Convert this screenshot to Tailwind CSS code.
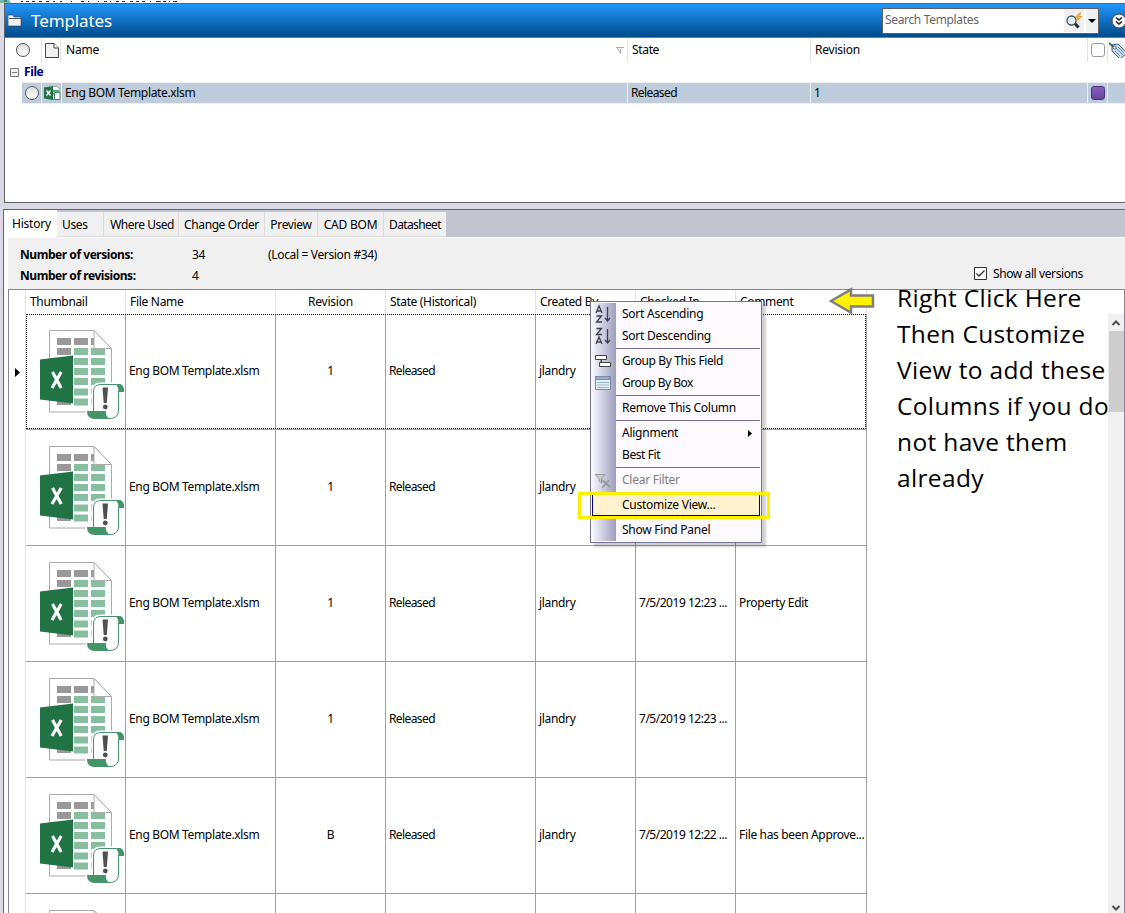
<!DOCTYPE html>
<html lang="en">
<head>
<meta charset="utf-8">
<title>Templates</title>
<script src="https://cdn.jsdelivr.net/npm/@tailwindcss/browser@4"></script>
</head>
<body class="relative flex h-[913px] w-[1125px] flex-col overflow-hidden bg-[#d9d8e5] font-['Noto_Sans',sans-serif] text-[12px] tracking-[-0.34px] whitespace-nowrap text-black">

<svg class="hidden">
  <symbol id="xl" viewBox="0 0 100 115">
    <path d="M23.5 15.5H68L85.5 33.5V97H23.5Z" fill="#fff" stroke="#ababab"/>
    <path fill="#999" d="M31 23h14v7H31zM48 23h14v7H48zM65 23h3v7h-3zM31 33h14v7H31zM31 83h14v7H31z"/>
    <path fill="#87be9f" d="M48 33h14v7H48zM65 33h14v7H65zM48 43h14v7H48zM65 43h14v7H65zM48 53h14v7H48zM65 53h14v7H65zM48 63h14v7H48zM65 63h14v7H65zM48 73.500h14v7H48zM65 73.500h14v7H65zM48 83.500h14v7H48zM65 83.500h14v7H65z"/>
    <path d="M68 15.500V33.500H85.500Z" fill="#fff" stroke="#ababab"/>
    <path d="M14 44.500L47 40.500V88.500L14 84.500Z" fill="#217346"/>
    <path d="M26.500 57L35.200 73M35.200 57L26 73" stroke="#fff" stroke-width="3.200"/>
    <path d="M61 97H67V77Q67 69 74 69H92Q98 69 98 77H92V96Q92 104 84 104H69Q61 104 61 97Z" fill="#fff" stroke="#fff" stroke-width="3"/>
    <path d="M67.500 96V77Q67.500 69.500 75 69.500H93Q97.500 69.500 97.500 76H92.500V95Q92.500 103.500 84 103.500H70" fill="#fff" stroke="#439467"/>
    <path d="M90 69H93Q98 69 98 77H92.500Q92.500 72 90 69ZM61 96H80Q79 101 84 104H69Q61 104 61 96Z" fill="#439467"/>
    <path d="M76.500 72.500H82L80.800 88H77.700Z" fill="#505050"/><circle cx="79.300" cy="92" r="2.400" fill="#505050"/>
  </symbol>
</svg>

<!-- window title remnant -->
<div class="flex h-[3px] shrink-0 bg-white">
  <svg width="220" height="3"><path d="M0 0H9L11 3H0Z" fill="#7fb5a9"/><path d="M4 0h3v2H4z" fill="#2f8f7a"/><path d="M21 1.500h2m3 0h3m3 0h3m4 0h3m4 0h3m4 0h2m5 0h2m9 0h1m9 0h3m4 0h1m9 0h1m5 0h3m3 0h1m5 0h3m3 0h3m5 0h3m3 0h3m3 0h3m5 0h1m5 0h5m2 0h3m3 0h1m3 0h4" stroke="#333" stroke-width="1"/></svg>
</div>

<!-- top panel -->
<section class="ml-[4px] flex h-[200px] shrink-0 flex-col border-y border-l border-[#63636c] bg-white">
  <header class="flex h-[34px] shrink-0 items-center border-b border-[#6d7c94] bg-linear-to-b from-[#2397fb] to-[#004b8c]">
    <svg class="ml-[3px]" width="14" height="13"><path d="M0 1.500Q0 1 1 1H5L6 3H13V12H0Z" fill="#f3f3f3" stroke="#333" stroke-width=".6"/><path d="M1 4.500H13" stroke="#555"/></svg>
    <h1 class="ml-[9px] text-[17px] leading-none tracking-[-0.1px] text-white">Templates</h1>
    <div class="mr-[12px] ml-auto flex h-[26px] w-[217px] items-center border border-[#5b6068] bg-white">
      <span class="ml-[2px] grow -translate-y-px tracking-[-0.34px] text-[#666]">Search Templates</span>
      <span class="flex h-[23px] w-5 items-center justify-center bg-[#f0f0f0]">
        <svg width="18" height="18" viewBox="0 0 18 18"><path d="M9.500 11L13.500 15.500" stroke="#222b35" stroke-width="3"/><circle cx="6.500" cy="8.500" r="4.500" fill="#dfedf5" stroke="#46525e" stroke-width="1.300"/><path d="M14.500 1L10 5.500H13L11 9.500L17 4.500H13.500L16 1Z" fill="#ffc928" stroke="#df8419" stroke-width=".7"/></svg>
      </span>
      <span class="ml-[2px] flex h-[23px] w-[12px] items-center justify-center bg-[#f0f0f0]"><svg width="8" height="4"><path d="M0 0H8L4 4Z"/></svg></span>
    </div>
    <svg class="w-[14px] shrink-0" height="16"><circle cx="8" cy="8" r="7" fill="#f5f5f5" stroke="#444"/><path d="M5 4.500L8 7L11 4.500M5 8.500L8 11L11 8.500" fill="none" stroke="#222" stroke-width="1.600"/></svg>
  </header>
  <div class="flex h-[24px] shrink-0 items-center">
    <svg class="ml-[10px]" width="16" height="16"><defs><linearGradient id="g" x2="0" y2="1"><stop stop-color="#ddd"/><stop offset="1" stop-color="#fff"/></linearGradient></defs><circle cx="8" cy="8" r="6.500" fill="url(#g)" stroke="#555"/></svg>
    <div class="ml-[10px] flex h-full w-[20px] items-center border-x border-[#e3e3e3]"><svg class="ml-[3px] shrink-0" width="15" height="17"><path d="M.5 1.500H9L13.500 6V15.500H.5Z" fill="#f2f2f2" stroke="#444"/><path d="M9 1.500V6H13.500" fill="#fff" stroke="#444"/></svg></div>
    <span class="ml-[5px] tracking-[-0.22px]">Name</span>
    <svg class="mr-[3px] ml-auto" width="8" height="7"><path d="M0 .5H8M1 .5L4.500 6.500V2" fill="none" stroke="#aaa"/></svg>
    <span class="flex h-full w-[183px] items-center border-l border-[#e3e3e3] pl-[4px]">State</span>
    <span class="flex h-full w-[277px] items-center border-l border-[#e3e3e3] pl-[4px] tracking-[-0.22px]">Revision</span>
    <span class="flex h-full w-[21px] items-center border-x border-[#e3e3e3] pl-[3px]"><span class="size-[14px] rounded-[3px] border border-[#999]"></span></span>
    <svg class="ml-[1px] shrink-0" width="16" height="16" viewBox="0 0 16 16"><path d="M3 3L9 2L18 11L11 17L3 9Z" fill="#c6dcec" stroke="#386080"/><path d="M7 6L14 13M6 9L11 14M9 5L15 11" stroke="#648ba9"/><path d="M0 1L5 5" stroke="#333" stroke-width="1.500"/><circle cx="5.500" cy="5.500" r="1.500" fill="#fff" stroke="#386080"/></svg>
  </div>
  <div class="flex h-[20px] shrink-0 items-center">
    <svg class="ml-[5px]" width="9" height="9"><path d="M.5 .5H8.500V8.500H.5ZM2 4.500H7" fill="#f5f5f5" stroke="#777"/></svg>
    <b class="ml-[5px] tracking-[-0.4px] text-[#00008b]">File</b>
  </div>
  <div class="ml-[17px] flex h-[22px] shrink-0 items-center border-y border-[#f0f0f0] bg-[#bfccdb]">
    <svg class="ml-[2px]" width="16" height="16"><circle cx="8" cy="8" r="6.500" fill="url(#g)" stroke="#555"/></svg>
    <span class="ml-[1px] flex h-full w-[21px] items-center border-x border-[#eee]"><svg class="ml-[2px] shrink-0" width="17" height="16" viewBox="0 0 17 16"><path d="M8.500 1.500H13L15.500 4V14.500H8.500Z" fill="#fff" stroke="#aaa"/><path d="M9 6H15M9 9H12" stroke="#57a47a" stroke-width="2"/><path d="M0 2.500L9 1V15L0 13.500Z" fill="#217346"/><path d="M2.500 5.500L6.500 10.500M6.500 5.500L2.500 10.500" stroke="#fff" stroke-width="1.400"/><path d="M10.500 7.500H16V14.500H10.500Z" fill="#fff" stroke="#439467"/></svg></span>
    <span class="ml-[3px]">Eng BOM Template.xlsm</span>
    <span class="ml-auto flex h-full w-[183px] items-center border-l border-[#eee] pl-[3px] tracking-[-0.6px]">Released</span>
    <span class="flex h-full w-[277px] items-center border-l border-[#eee] pl-[3px]">1</span>
    <span class="flex h-full w-[21px] items-center border-x border-[#eee] pl-[3px]"><span class="size-[14px] rounded-[3px] border border-[#4b2f80] bg-linear-to-b from-[#8562bd] to-[#65469d]"></span></span>
    <span class="w-[17px]"></span>
  </div>
</section>

<!-- details panel -->
<section class="mt-[6px] ml-[3px] flex min-h-0 grow flex-col overflow-hidden border-t border-l border-[#63636c] bg-white">
  <nav class="flex h-[27px] shrink-0 items-end bg-[#c2c4ce]">
    <span class="flex h-full w-[53px] items-center bg-white pl-[8px] tracking-[-0.22px]">History</span>
    <span class="flex h-[25px] w-[47px] items-center border-r border-b border-[#dadada] bg-[#f0f0f0] pt-[2px] pl-[5px]">Uses</span>
    <span class="flex h-[25px] w-[75px] items-center justify-center border-r border-b border-[#dadada] bg-[#f0f0f0] pt-[2px] pl-[2px] tracking-[-0.5px]">Where Used</span>
    <span class="flex h-[25px] w-[86px] items-center justify-center border-r border-b border-[#dadada] bg-[#f0f0f0] pt-[2px] tracking-[-0.4px]">Change Order</span>
    <span class="flex h-[25px] w-[53px] items-center justify-center border-r border-b border-[#dadada] bg-[#f0f0f0] pt-[2px]">Preview</span>
    <span class="flex h-[25px] w-[66px] items-center justify-center border-r border-b border-[#dadada] bg-[#f0f0f0] pt-[2px] tracking-[-0.22px]">CAD BOM</span>
    <span class="flex h-[25px] w-[62px] items-center justify-center border-b border-[#dadada] bg-[#f0f0f0] pt-[2px] tracking-[-0.64px]">Datasheet</span>
  </nav>
  <div class="mt-[1px] ml-[4px] flex h-[51px] shrink-0 bg-[#f0f0f0]">
    <div class="grid w-[970px] shrink-0 grid-cols-[172px_76px_1fr] grid-rows-[21px_21px] content-start pt-[6px] pl-[12px] leading-[21px]">
      <b class="tracking-[-0.45px]">Number of versions:</b><span>34</span><span>(Local = Version #34)</span>
      <b class="tracking-[-0.45px]">Number of revisions:</b><span>4</span>
    </div>
    <div class="mb-[7px] -ml-[4px] flex h-[16px] items-center self-end">
      <svg class="-translate-y-px" width="13" height="13"><path d="M.5 .5H12.500V12.500H.5Z" fill="#fff" stroke="#333"/><path d="M2.500 6.500L5 9L10.500 3.500" fill="none" stroke="#333" stroke-width="1.300"/></svg>
      <span class="ml-[6px] tracking-[-0.4px]">Show all versions</span>
    </div>
  </div>

  <!-- grid -->
  <div class="ml-[4px] flex min-h-0 w-[1117px] grow border-x border-t border-[#828790] bg-white">
    <div class="min-h-0 w-[858px] shrink-0 overflow-hidden">
      <div class="grid h-[24px] grid-cols-[16px_100px_150px_110px_150px_100px_100px_132px] leading-[24px]">
        <span></span>
        <span class="border-l border-[#e3e3e3] pl-[4px]">Thumbnail</span>
        <span class="border-l border-[#e3e3e3] pl-[4px] tracking-[-0.3px]">File Name</span>
        <span class="border-l border-[#e3e3e3] text-center tracking-[-0.22px]">Revision</span>
        <span class="border-l border-[#e3e3e3] pl-[4px]">State (Historical)</span>
        <span class="border-l border-[#e3e3e3] pl-[4px]">Created By</span>
        <span class="border-l border-[#e3e3e3] pl-[4px]">Checked In</span>
        <span class="border-x border-[#e3e3e3] pl-[4px]">Comment</span>
      </div>
      <div id="rows" class="relative"></div>
    </div>
    <div class="grow"></div>
    <div class="mt-[24px] flex w-[16px] flex-col items-center bg-[#f0f0f0]">
      <svg class="shrink-0" width="16" height="17"><path d="M4.500 11L8 7.500L11.500 11" fill="none" stroke="#505050" stroke-width="2"/></svg>
      <div class="h-[81px] w-[15px] bg-[#cdcdcd]"></div>
      <svg class="mt-auto mb-[-1px]" width="16" height="12"><path d="M4.500 4L8 7.500L11.500 4" fill="none" stroke="#505050" stroke-width="2"/></svg>
    </div>
  </div>
</section>

<!-- callout over the grid -->
<svg class="absolute top-[286px] left-[828px]" width="47" height="30"><path d="M3 15L23 3.500V9.500H45V20.500H23V26.500Z" fill="#fff200" stroke="#7f7f7f" stroke-width="2.500"/></svg>
<p class="absolute top-[280px] left-[897px] font-['Open_Sans',sans-serif] text-[24.5px] leading-[36px] tracking-[0.35px]">Right Click Here<br>Then Customize<br>View to add these<br>Columns if you do<br>not have them<br>already</p>

<!-- context menu -->
<div class="absolute top-[301px] left-[590px] flex h-[242px] w-[172px] flex-col border border-[#75759a] bg-[#fcfaff] p-[1px] tracking-[-0.25px] shadow-[4px_4px_2px_rgba(0,0,0,0.18)]">
  <div class="flex h-full flex-col bg-linear-to-r from-[#f7f8ff] to-[#9f9dbc] bg-[length:24px_100%] bg-no-repeat">
    <div class="flex h-[22px] shrink-0 items-center"><svg class="w-[24px]" height="20" fill="none" stroke="#3b4148" stroke-width="1.300"><path d="M4 9L7 2L10 9M5 7H9M4.500 12H9.500L4.500 18H10M15.500 3V17M13 14L15.500 17L18 14"/></svg><span class="ml-[6px]">Sort Ascending</span></div>
    <div class="flex h-[22px] shrink-0 items-center"><svg class="w-[24px]" height="20" fill="none" stroke="#3b4148" stroke-width="1.300"><path d="M4.500 2.500H9.500L4.500 8.500H10M4 18L7 11L10 18M5 16H9M15.500 3V17M13 14L15.500 17L18 14"/></svg><span class="ml-[6px]">Sort Descending</span></div>
    <hr class="my-[1px] ml-[24px] border-[#75709b]">
    <div class="flex h-[22px] shrink-0 items-center"><svg class="w-[24px]" height="16"><path d="M9.500 6V10.500H8M9 6V11" fill="none" stroke="#444"/><path d="M3.500 2.500H14.500V6.500H3.500ZM7.500 9.500H18.500V13.500H7.500Z" fill="#fff" stroke="#444"/></svg><span class="ml-[6px] tracking-[-0.38px]">Group By This Field</span></div>
    <div class="flex h-[22px] shrink-0 items-center"><svg class="w-[24px]" height="16"><path d="M3.500 1.500H18.500V14.500H3.500Z" fill="#e6eff6" stroke="#718da6"/><path d="M3 1H19V5H3Z" fill="#7590ab"/><path d="M4 3H17" stroke="#b7cad9"/><path d="M5 7.500H17M5 10H17M5 12.500H17" stroke="#98b5ca"/></svg><span class="ml-[6px] tracking-[-0.5px]">Group By Box</span></div>
    <hr class="my-[1px] ml-[24px] border-[#75709b]">
    <div class="flex h-[22px] shrink-0 items-center pl-[30px]">Remove This Column</div>
    <hr class="my-[1px] ml-[24px] border-[#75709b]">
    <div class="flex h-[22px] shrink-0 items-center justify-between pr-[8px] pl-[30px]">Alignment<svg width="4" height="7"><path d="M0 0L4 3.500L0 7Z"/></svg></div>
    <div class="flex h-[22px] shrink-0 items-center pl-[30px] tracking-[-0.4px]">Best Fit</div>
    <hr class="my-[1px] ml-[24px] border-[#75709b]">
    <div class="flex h-[22px] shrink-0 items-center text-[#808080]"><svg class="w-[24px]" height="18"><path d="M3 3.500H13L9.500 7.500V12L7 10V7.500Z" fill="#ccc" stroke="#999"/><path d="M10 9L18 16M17 9L10 17" stroke="#999" stroke-width="1.700"/></svg><span class="ml-[6px]">Clear Filter</span></div>
    <hr class="my-[1px] ml-[24px] border-[#75709b]">
    <div class="flex h-[22px] shrink-0 items-center border border-[#000080] bg-[#fff3cf] pl-[29px]">Customize View...</div>
    <hr class="my-[1px] ml-[24px] border-[#75709b]">
    <div class="flex h-[22px] shrink-0 items-center pl-[30px]">Show Find Panel</div>
  </div>
</div>
<div class="absolute top-[492px] left-[578px] h-[27px] w-[192px] border-[3px] border-[#ffee00]"></div>

<script>
const rows = [['1','',''],['1','',''],['1','7/5/2019 12:23 ...','Property Edit'],['1','7/5/2019 12:23 ...',''],['B','7/5/2019 12:22 ...','File has been Approve...'],['','','']];
document.getElementById('rows').innerHTML = rows.map(([rev, date, note], i) => {
  const c = 'flex items-center border-r border-b border-[#a0a0a0] pb-[2px] pl-[3px]', last = i === 5;
  return `<div class="relative grid h-[116px] grid-cols-[17px_100px_150px_110px_150px_100px_100px_131px]">
    <span class="flex items-center border-r border-[#e3e3e3] pl-[6px]">${i ? '' : '<svg width="5" height="9"><path d="M0 0L5 4.500L0 9Z"/></svg>'}</span>
    <span class="flex border-r border-b border-[#a0a0a0] pt-px"><svg class="shrink-0" width="99" height="114" viewBox="0 0 99 114"><use href="#xl" width="100" height="115"/></svg></span>
    <span class="${c}">${last ? '' : 'Eng BOM Template.xlsm'}</span>
    <span class="flex items-center justify-center border-r border-b border-[#a0a0a0] pb-[2px]">${rev}</span>
    <span class="${c} tracking-[-0.6px]">${last ? '' : 'Released'}</span>
    <span class="${c}">${last ? '' : 'jlandry'}</span>
    <span class="${c} tracking-[-0.48px]">${date}</span>
    <span class="${c}">${note}</span>
    ${i ? '' : '<span class="absolute top-0 left-[17px] h-[115px] w-[840px] border border-dotted border-black"></span>'}
  </div>`;
}).join('');
</script>
</body>
</html>
